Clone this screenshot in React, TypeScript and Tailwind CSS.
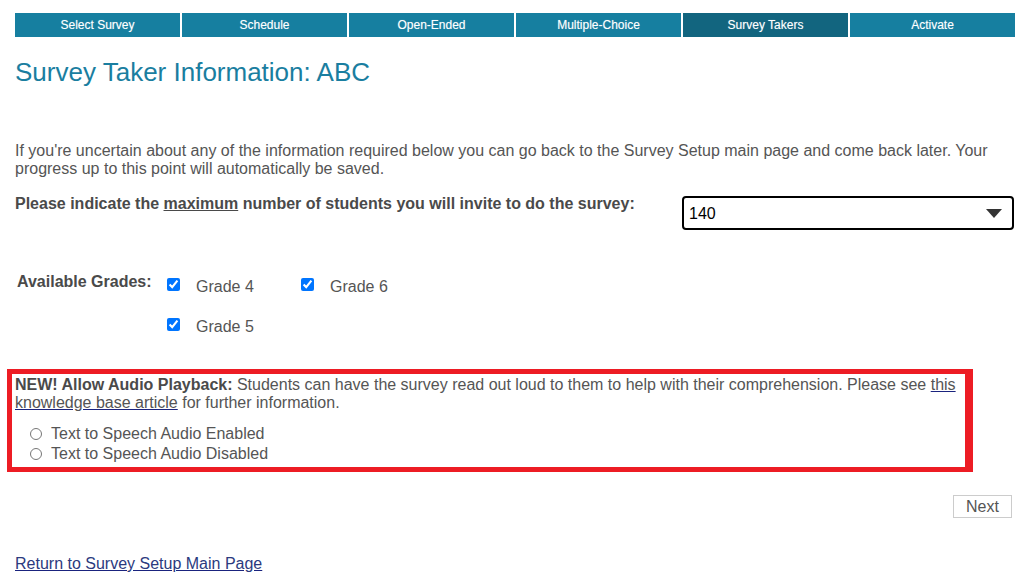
import React from 'react';

const tabs = ['Select Survey', 'Schedule', 'Open-Ended', 'Multiple-Choice', 'Survey Takers', 'Activate'];

export default function App() {
    return (
        <div className="min-h-[580px] bg-white pl-[15px] pr-[7px] pt-[13px] text-[#555] font-['Liberation_Sans',Arial,sans-serif]">
            {/* Wizard tabs */}
            <div className="grid grid-cols-6 gap-[2px]">
                {tabs.map(t => (
                    <div
                        key={t}
                        className={`h-[24px] flex items-center justify-center text-[12px] text-white [text-shadow:0_0_1px_rgba(255,255,255,0.4)] ${t === 'Survey Takers' ? 'bg-[#12657f]' : 'bg-[#167fa0]'}`}
                    >
                        {t}
                    </div>
                ))}
            </div>

            <h1 className="mt-[20px] text-[26px] leading-[30px] text-[#1a7ea0]">Survey Taker Information: ABC</h1>

            <p className="mt-[55px] text-[16px] leading-[18px]">
                If you're uncertain about any of the information required below you can go back to the Survey Setup main page and come back later. Your progress up to this point will automatically be saved.
            </p>

            <div className="mt-[17px] flex items-start justify-between">
                <div className="text-[16px] leading-[18px] font-bold text-[#4a4a4a]">
                    Please indicate the <span className="underline">maximum</span> number of students you will invite to do the survey:
                </div>
                <div className="w-[332px] h-[34px] mt-[1px] mr-[1px] border-2 border-black rounded-[4px] flex items-center justify-between pl-[5px] pr-[10px]">
                    <span className="text-[16px] text-black mt-[2px]">140</span>
                    <svg width="16" height="9" viewBox="0 0 16 9"><path d="M0 0h16L8 9z" fill="#333" /></svg>
                </div>
            </div>

            {/* Grades */}
            <div className="mt-[43px] flex items-start">
                <div className="w-[152px] pl-[2px] text-[16px] leading-[18px] font-bold text-[#4a4a4a]">Available Grades:</div>
                <div className="grid grid-cols-[134px_auto] gap-y-[22px] pt-[5px]">
                    {['Grade 4', 'Grade 6', 'Grade 5'].map(g => (
                        <label key={g} className="flex items-start">
                            <input type="checkbox" defaultChecked className="m-0 w-[13px] h-[13px] accent-[#0075ff]" />
                            <span className="ml-[16px] text-[16px] leading-[18px]">{g}</span>
                        </label>
                    ))}
                </div>
            </div>

            {/* Audio playback */}
            <div className="mt-[33px] -ml-[8px] w-[966px] border-[5px] border-r-[8px] border-[#ed1c24] pl-[3px] pt-[2px] pb-[3px] text-[16px] leading-[18px]">
                <p>
                    <b className="text-[#4a4a4a]">NEW! Allow Audio Playback:</b> Students can have the survey read out loud to them to help with their comprehension. Please see{' '}
                    <a className="underline decoration-[#1a237e]">this knowledge base article</a> for further information.
                </p>
                <div className="mt-[12px] pl-[15px] flex flex-col">
                    {['Text to Speech Audio Enabled', 'Text to Speech Audio Disabled'].map(r => (
                        <label key={r} className="flex items-center h-[20px]">
                            <input type="radio" name="audio" className="m-0 w-[12px] h-[12px]" />
                            <span className="ml-[9px]">{r}</span>
                        </label>
                    ))}
                </div>
            </div>

            <div className="mt-[23px] flex justify-end pr-[3px]">
                <button className="w-[59px] h-[23px] border border-[#ccc] text-[16px] leading-[18px] text-[#555] bg-white">Next</button>
            </div>

            <a className="block mt-[37px] text-[16px] leading-[18px] text-[#2b3a7e] underline decoration-[#1a237e]">Return to Survey Setup Main Page</a>
        </div>
    );
}
